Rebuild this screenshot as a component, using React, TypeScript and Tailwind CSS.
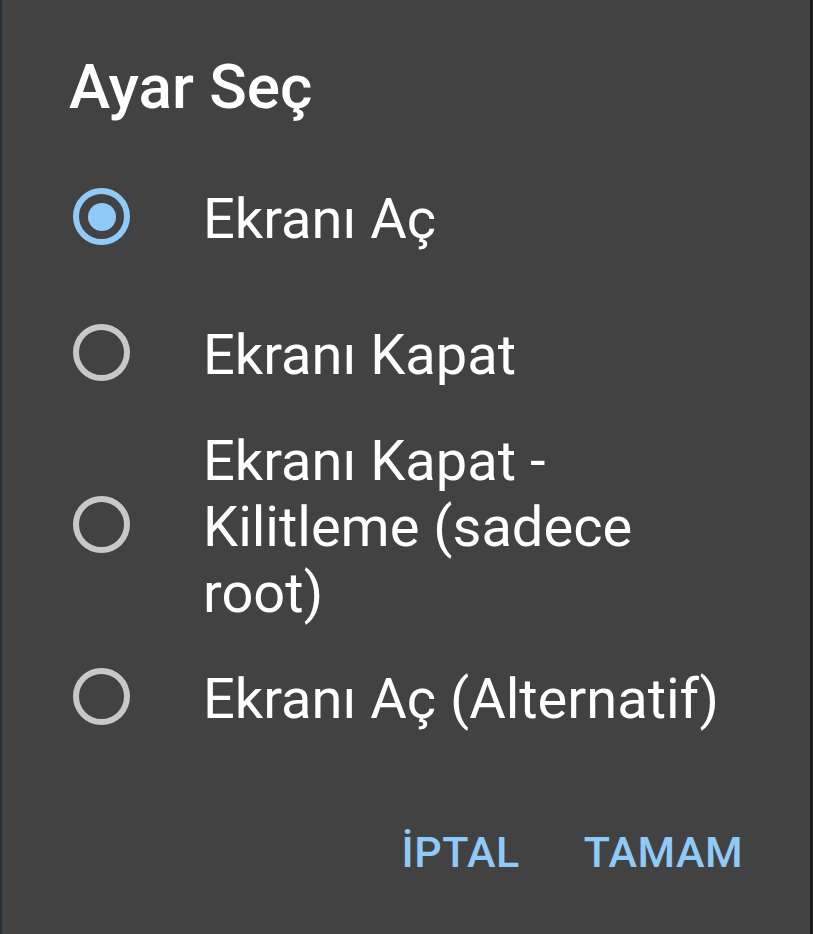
import { useState } from "react";

const SECENEKLER = [
  "Ekranı Aç",
  "Ekranı Kapat",
  "Ekranı Kapat - Kilitleme (sadece root)",
  "Ekranı Aç (Alternatif)",
];

function Radyo({ secili }: { secili: boolean }) {
  return secili ? (
    <span className="flex h-[57px] w-[57px] shrink-0 items-center justify-center rounded-full border-[6px] border-[#90caf9]">
      <span className="h-[28px] w-[28px] rounded-full bg-[#90caf9]" />
    </span>
  ) : (
    <span className="block h-[57px] w-[57px] shrink-0 rounded-full border-[6px] border-[#c8c8c8]" />
  );
}

export default function App() {
  const [secim, setSecim] = useState(0);

  return (
    <div className="flex h-[934px] w-[813px] flex-col border-l-2 border-r-[3px] border-l-[#263038] border-r-[#1c1c1c] bg-[#424242] font-['Roboto',sans-serif] text-white">
      <h1 className="pl-[67px] pt-[51px] text-[62px] font-medium leading-[72px]">Ayar Seç</h1>

      {/* seçenekler */}
      <div className="mt-[28px] flex flex-col">
        {SECENEKLER.map((s, i) => (
          <button
            key={s}
            onClick={() => setSecim(i)}
            className="flex min-h-[136px] items-center py-[5px] pl-[71px] pr-[68px] text-left"
          >
            <span className="mb-[5px] flex shrink-0">
              <Radyo secili={secim === i} />
            </span>
            <span className="ml-[73px] text-[56px] leading-[66px]">{s}</span>
          </button>
        ))}
      </div>

      <div className="mt-[58px] flex justify-end gap-[64px] pr-[67px] text-[43px] font-medium leading-[54px] tracking-[0.5px] text-[#90caf9]">
        <button>İPTAL</button>
        <button>TAMAM</button>
      </div>
    </div>
  );
}
